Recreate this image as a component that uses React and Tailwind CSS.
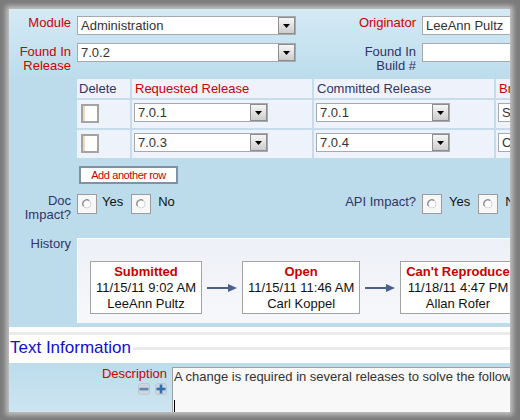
import React from 'react';

// dropdown box with the little grey button on the right
function Select({ value, className = '' }) {
  return (
    <div className={`flex h-[19px] shrink-0 items-stretch border border-[#a5a9b0] bg-white ${className}`}>
      <span className="flex-1 overflow-hidden whitespace-nowrap pl-[3px] leading-[17px] text-[#333]">{value}</span>
      <span className="flex w-[17px] items-center justify-center border border-[#8d8d8d] bg-gradient-to-b from-[#f6f6f6] to-[#cdcdcd]">
        <svg width="7" height="4" viewBox="0 0 7 4">
          <path d="M0 0h7L3.5 4z" fill="#000" />
        </svg>
      </span>
    </div>
  );
}

function Radio({ className = '' }) {
  return (
    <span className={`flex h-[20px] w-[20px] shrink-0 items-center justify-center border border-[#9c9c9c] bg-[#f7f7f7] ${className}`}>
      <svg width="10" height="10" viewBox="0 0 10 10">
        <circle cx="5" cy="5" r="4" fill="#fdfdfd" stroke="#d6d6d6" strokeWidth="1" />
        <path d="M1.6 7.2A4 4 0 0 1 7.2 1.6" fill="none" stroke="#8c8c8c" strokeWidth="1.2" />
      </svg>
    </span>
  );
}

function Checkbox() {
  return (
    <span className="block h-[19px] w-[18px] border-2 border-[#a3a3a3] bg-white">
      <span className="block h-full w-[2px] bg-[#f1d6bb]" />
    </span>
  );
}

function Arrow() {
  return (
    <svg className="mx-[5px] shrink-0" width="30" height="10" viewBox="0 0 30 10">
      <line x1="0" y1="5" x2="22" y2="5" stroke="#4a6189" strokeWidth="2" />
      <path d="M21 1L30 5L21 9z" fill="#4a6189" />
    </svg>
  );
}

function HistoryBox({ status, date, who }) {
  return (
    <div className="h-[53px] shrink-0 border border-[#a3a3a3] bg-white px-[5px] pt-[2px] text-center leading-[16px] whitespace-nowrap">
      <div className="font-bold text-[#cc0000]">{status}</div>
      <div className="text-[#111]">{date}</div>
      <div className="text-[#111]">{who}</div>
    </div>
  );
}

const releases = [
  { req: '7.0.1', com: '7.0.1', br: 'Same' },
  { req: '7.0.3', com: '7.0.4', br: 'Current' },
];

export default function App() {
  return (
    <div className="h-[420px] w-[520px] bg-[#7b7b7b] pb-[8px] pl-[9px] pr-[10px] pt-[9px] font-['Liberation_Sans',Arial,sans-serif] text-[13px] leading-[14px]">
      <div className="flex h-full w-full flex-col overflow-hidden bg-[#bcdcec] shadow-[0_0_5px_3px_rgba(205,205,205,0.9)]">
        {/* top fields */}
        <div className="bg-gradient-to-b from-[#d5eaf5] to-[#bcdcec] pb-[6px] pt-[7px]">
          <div className="flex items-start">
            <div className="w-[62px] shrink-0 text-right text-[#cc0000]">Module</div>
            <Select className="ml-[6px] w-[219px]" value="Administration" />
            <div className="w-[120px] shrink-0 text-right text-[#cc0000]">Originator</div>
            <div className="ml-[6px] h-[19px] w-[160px] shrink-0 border border-[#a5a9b0] bg-white pl-[3px] leading-[17px] text-[#333]">
              LeeAnn Pultz
            </div>
          </div>
          <div className="mt-[8px] flex items-start">
            <div className="mt-[2px] w-[62px] shrink-0 text-right text-[#cc0000]">
              Found In
              <br />
              Release
            </div>
            <Select className="ml-[6px] w-[219px]" value="7.0.2" />
            <div className="mt-[2px] w-[120px] shrink-0 text-right text-[#333366]">
              Found In
              <br />
              Build #
            </div>
            <div className="ml-[6px] h-[19px] w-[160px] shrink-0 border border-[#a5a9b0] bg-white" />
          </div>
        </div>

        {/* release table */}
        <div className="ml-[68px] grid w-max grid-cols-[53px_180px_180px_120px] grid-rows-[19px_28px_28px] gap-[2px] bg-[#c6dcec]">
          <div className="bg-[#eef2fb] pl-[2px] leading-[19px] text-[#333366]">Delete</div>
          <div className="bg-[#eef2fb] pl-[3px] leading-[19px] text-[#cc0000]">Requested Release</div>
          <div className="bg-[#eef2fb] pl-[3px] leading-[19px] text-[#333366]">Committed Release</div>
          <div className="bg-[#eef2fb] pl-[3px] leading-[19px] text-[#cc0000]">Branch</div>
          {releases.map(r => (
            <React.Fragment key={r.req}>
              <div className="bg-[#eef2fb] pl-[4px] pt-[4px]">
                <Checkbox />
              </div>
              <div className="bg-[#eef2fb] pl-[2px] pt-[3px]">
                <Select className="w-[134px]" value={r.req} />
              </div>
              <div className="bg-[#eef2fb] pl-[2px] pt-[3px]">
                <Select className="w-[134px]" value={r.com} />
              </div>
              <div className="bg-[#eef2fb] pl-[2px] pt-[3px]">
                <Select className="w-[110px]" value={r.br} />
              </div>
            </React.Fragment>
          ))}
        </div>

        <div className="ml-[70px] mt-[8px]">
          <button className="h-[18px] w-[99px] border-2 border-[#8090a5] bg-white text-[11px] leading-[14px] tracking-[-0.4px] text-[#cc0000]">
            Add another row
          </button>
        </div>

        {/* impact radios */}
        <div className="mt-[10px] flex items-start">
          <div className="w-[62px] shrink-0 text-right text-[#333366]">
            Doc
            <br />
            Impact?
          </div>
          <div className="ml-[6px] flex w-[219px] shrink-0 items-start">
            <Radio />
            <span className="ml-[5px] mt-[1px] text-[#111]">Yes</span>
            <Radio className="ml-[8px]" />
            <span className="ml-[7px] mt-[1px] text-[#111]">No</span>
          </div>
          <div className="w-[120px] shrink-0 pt-[1px] text-right text-[#333366]">API Impact?</div>
          <Radio className="ml-[6px]" />
          <span className="ml-[7px] mt-[1px] text-[#111]">Yes</span>
          <Radio className="ml-[8px]" />
          <span className="ml-[7px] mt-[1px] text-[#111]">No</span>
        </div>

        {/* history */}
        <div className="mt-[15px] flex items-start">
          <div className="w-[62px] shrink-0 text-right text-[#333366]">History</div>
          <div className="ml-[6px] mt-[1px] flex h-[85px] w-[480px] shrink-0 items-center border-l border-t border-white bg-gradient-to-b from-[#edf0f7] to-[#f7f8fb] pb-[6px] pl-[12px] pt-[19px]">
            <HistoryBox status="Submitted" date="11/15/11 9:02 AM" who="LeeAnn Pultz" />
            <Arrow />
            <HistoryBox status="Open" date="11/15/11 11:46 AM" who="Carl Koppel" />
            <Arrow />
            <HistoryBox status="Can't Reproduce" date="11/18/11 4:47 PM" who="Allan Rofer" />
          </div>
        </div>

        {/* section header */}
        <div className="mt-[4px] h-[36px] shrink-0 bg-white pt-[5px]">
          <div className="h-[3px] bg-[#ebebeb]" />
          <div className="mt-[3px] flex h-[20px] items-center">
            <span className="pl-[1px] text-[17px] leading-[20px] text-[#1111cc]">Text Information</span>
            <span className="ml-[2px] h-[3px] flex-1 bg-[#ebebeb]" />
          </div>
        </div>

        {/* description */}
        <div className="flex flex-1 items-start bg-gradient-to-b from-[#bcdcec] to-[#d2e7f2] pt-[4px]">
          <div className="flex w-[158px] shrink-0 flex-col items-end">
            <span className="text-[#cc0000]">Description</span>
            <div className="mt-[2px] flex gap-[5px]">
              <svg width="12" height="12" viewBox="0 0 12 12">
                <rect x="0.5" y="0.5" width="11" height="11" rx="2" fill="#cdd6df" stroke="#bcc7d2" />
                <rect x="1.5" y="4.8" width="9" height="2.6" fill="#5f87ad" />
              </svg>
              <svg width="12" height="12" viewBox="0 0 12 12">
                <rect x="0.5" y="0.5" width="11" height="11" rx="2" fill="#cdd6df" stroke="#bcc7d2" />
                <rect x="1.5" y="4.7" width="9" height="2.6" fill="#2f6fb0" />
                <rect x="4.7" y="1.5" width="2.6" height="9" fill="#2f6fb0" />
              </svg>
            </div>
          </div>
          <div className="ml-[5px] h-[60px] w-[400px] shrink-0 whitespace-nowrap border border-[#a0a0a0] bg-[#f8f8f8] pl-px pt-[2px] leading-[14px] text-[#333]">
            A change is required in several releases to solve the following issue:
            <br />
            <br />
            <span className="inline-block h-[12px] w-px bg-black align-middle" />
          </div>
        </div>
      </div>
    </div>
  );
}
